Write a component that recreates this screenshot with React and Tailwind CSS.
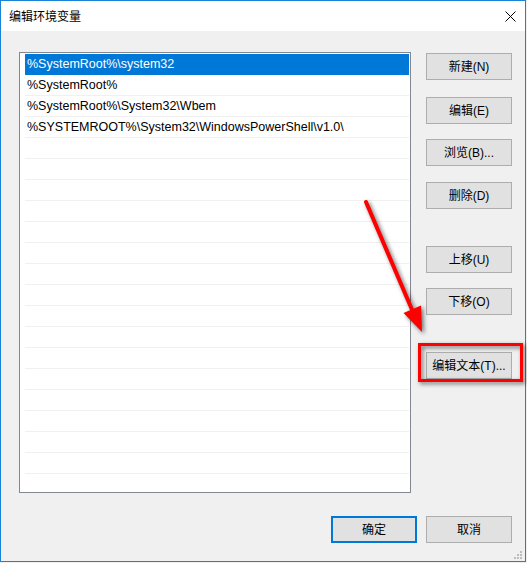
import React from "react";

const rows = [
  "%SystemRoot%\\system32",
  "%SystemRoot%",
  "%SystemRoot%\\System32\\Wbem",
  "%SYSTEMROOT%\\System32\\WindowsPowerShell\\v1.0\\",
];

const FONT = { fontFamily: '"Liberation Sans", "Noto Sans CJK SC", sans-serif' };

function Btn({ children, className = "", primary = false }) {
  return (
    <div
      className={
        "w-[86px] h-[27px] flex items-center justify-center bg-[#e1e1e1] text-[12px] text-black " +
        (primary ? "border-2 border-[#0078d7] " : "border border-[#adadad] ") +
        className
      }
    >
      {children}
    </div>
  );
}

export default function App() {
  const total = 21;
  return (
    <div className="w-[527px] h-[563px] bg-[#f0f0f0]" style={FONT}>
      <div className="relative w-[526px] h-[562px] border border-[#1883d7] flex flex-col bg-[#f0f0f0]">
        {/* title bar */}
        <div className="h-[30px] bg-white flex items-center justify-between pl-[8px] pr-[9px] shrink-0">
          <span className="text-[12px] text-black leading-none" style={{ fontFamily: '"Noto Sans CJK SC", sans-serif' }}>
            编辑环境变量
          </span>
          <svg width="11" height="11" viewBox="0 0 11 11" className="mt-[0px]">
            <path d="M0.5 0.5 L10.5 10.5 M10.5 0.5 L0.5 10.5" stroke="#000" strokeWidth="1" fill="none" />
          </svg>
        </div>
        {/* body */}
        <div className="flex-1 flex flex-col">
          <div className="flex pt-[21px] pl-[18px]">
            <div className="w-[392px] h-[441px] border border-[#828790] bg-white pt-[1px] pl-[5px] pr-[1px] overflow-hidden">
              {Array.from({ length: total }).map((_, i) => (
                <div
                  key={i}
                  className={
                    "h-[21px] flex items-center pl-[2px] text-[12.5px] whitespace-nowrap " +
                    (i === 0 ? "bg-[#0078d7] text-white" : "text-black border-b border-[#f0f0f0]")
                  }
                >
                  {rows[i] || ""}
                </div>
              ))}
            </div>
            <div className="ml-[15px] flex flex-col pt-[1px]">
              <Btn>新建(N)</Btn>
              <Btn className="mt-[17px]">编辑(E)</Btn>
              <Btn className="mt-[15px]">浏览(B)...</Btn>
              <Btn className="mt-[16px]">删除(D)</Btn>
              <Btn className="mt-[37px]">上移(U)</Btn>
              <Btn className="mt-[15px]">下移(O)</Btn>
              <Btn className="mt-[37px]">编辑文本(T)...</Btn>
            </div>
          </div>
          <div className="flex justify-end pr-[13px] mt-[23px] gap-[9px]">
            <Btn primary>确定</Btn>
            <Btn>取消</Btn>
          </div>
        </div>
        {/* grip */}
        <svg className="absolute right-[3px] bottom-[2px]" width="8" height="8" viewBox="0 0 8 8">
          <rect x="6" y="0" width="2" height="2" fill="#bcbcbc" />
          <rect x="3" y="3" width="2" height="2" fill="#bcbcbc" />
          <rect x="6" y="3" width="2" height="2" fill="#bcbcbc" />
          <rect x="0" y="6" width="2" height="2" fill="#bcbcbc" />
          <rect x="3" y="6" width="2" height="2" fill="#bcbcbc" />
          <rect x="6" y="6" width="2" height="2" fill="#bcbcbc" />
        </svg>
      </div>
      {/* annotations */}
      <svg
        className="absolute left-0 top-0 pointer-events-none drop-shadow-[2px_2px_2px_rgba(0,0,0,0.55)]"
        width="527"
        height="563"
        viewBox="0 0 527 563"
      >
        <line x1="366" y1="202" x2="413" y2="312" stroke="#ff0000" strokeWidth="4" strokeLinecap="round" />
        <polygon points="422,332 403.5,313 421,305.5" fill="#ff0000" />
        <rect x="419.5" y="344.5" width="102" height="36" fill="none" stroke="#ff0000" strokeWidth="3" />
      </svg>
    </div>
  );
}
